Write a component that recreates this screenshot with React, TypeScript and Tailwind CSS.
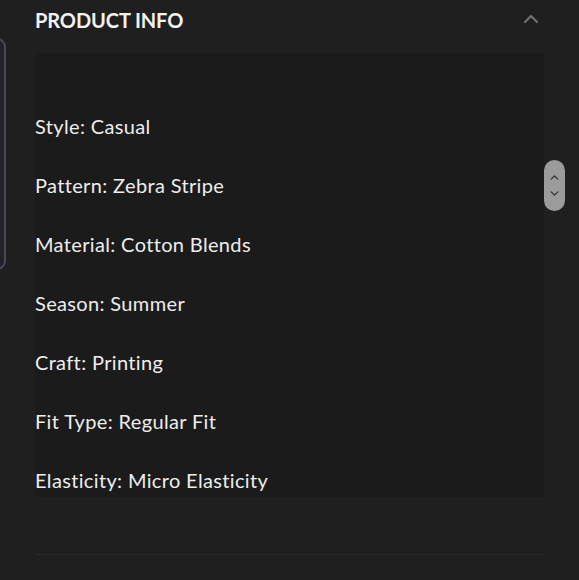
import { ChevronUp, ChevronDown } from "lucide-react";

const specs = [
  "Style: Casual",
  "Pattern: Zebra Stripe",
  "Material: Cotton Blends",
  "Season: Summer",
  "Craft: Printing",
  "Fit Type: Regular Fit",
  "Elasticity: Micro Elasticity",
];

function App() {
  return (
    <div
      className="relative w-[579px] h-[580px] overflow-hidden bg-[#1f1f1f] text-[#ededed]"
      style={{ fontFamily: "Lato, 'Open Sans', sans-serif" }}
    >
      {/* drawer peeking from the left edge */}
      <div className="absolute left-[-20px] top-[38px] w-[26px] h-[232px] rounded-r-[9px] border-2 border-[#4a4858] bg-[#23222b]" />

      <section className="px-[35px]">
        <header className="flex items-center justify-between h-[40px]">
          <h2 className="text-[20px] font-bold tracking-[-0.1px] text-[#f2f2f2]">
            PRODUCT INFO
          </h2>
          <ChevronUp className="mr-[1px] mt-[-2px] text-[#707070]" size={24} strokeWidth={2.2} />
        </header>

        <div className="mt-[13px] bg-[#1b1b1b] pt-[59px] pb-[3px] flex flex-col gap-[31px]">
          {specs.map((s) => (
            <p key={s} className="text-[20px] leading-[28px] tracking-[0.35px]">
              {s}
            </p>
          ))}
        </div>

        <div className="mt-[57px] h-px bg-[#2a2a2a]" />
      </section>

      <div className="absolute left-[544px] top-[160px] w-[21px] h-[51px] rounded-full bg-[#9b9b9b] flex flex-col items-center justify-center gap-[3px] text-[#333333]">
        <ChevronUp size={13} strokeWidth={2.6} />
        <ChevronDown size={13} strokeWidth={2.6} />
      </div>
    </div>
  );
}

export default App;
